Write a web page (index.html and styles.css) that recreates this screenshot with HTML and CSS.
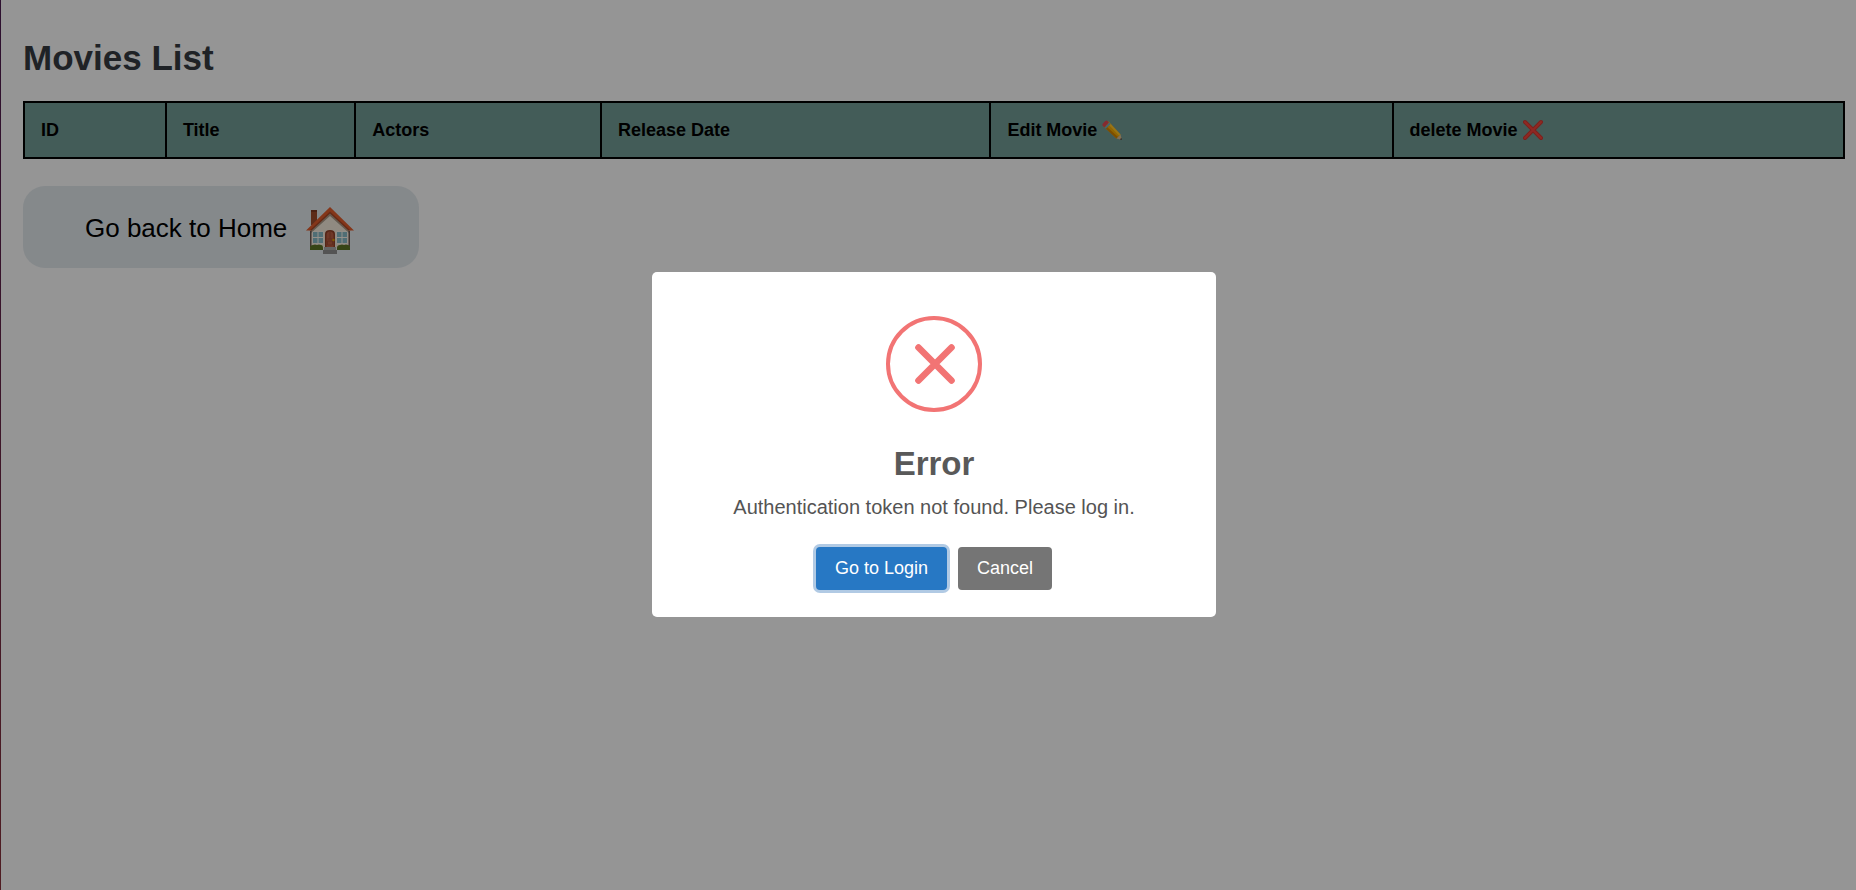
FILE: index.html
```html
<!DOCTYPE html>
<html lang="en">
<head>
<meta charset="utf-8">
<title>Movies List</title>
<link rel="stylesheet" href="styles.css">
</head>
<body>
<main class="page">
  <h1 class="page-title">Movies List</h1>
  <table class="movies">
    <colgroup>
      <col class="col-id">
      <col class="col-title">
      <col class="col-actors">
      <col class="col-date">
      <col class="col-edit">
      <col class="col-delete">
    </colgroup>
    <thead>
      <tr>
        <th>ID</th>
        <th>Title</th>
        <th>Actors</th>
        <th>Release Date</th>
        <th>Edit Movie <svg class="th-icon" viewBox="0 0 20 20" aria-hidden="true">
          <path d="M1.500 6.500 6.500 1.500 18.500 14.500 14.500 18.500z" fill="#f0a800"/>
          <path d="M1.500 6.500 3 5l13 12-1.500 1.500z" fill="#cf8000"/>
          <path d="M6.500 1.500l12 13-1.300 1.300L5 3z" fill="#ffc227"/>
          <path d="m14.500 18.500 4-4 1.500 5.500z" fill="#dcb98a"/>
          <path d="m17.800 19.400 1.600-1.600.6 2.200z" fill="#444"/>
          <path d="M2.300 7.500 7.300 2.500 8.600 4 3.900 8.800z" fill="#72a5bd"/>
          <path d="M.5 5.200C-.4 4 3.800-.4 5 .5L7 2.500 2.200 7.200z" fill="#de4650"/>
        </svg></th>
        <th>delete Movie <svg class="th-icon" viewBox="0 0 20 20" aria-hidden="true">
          <path d="M2 2l16 16M18 2L2 18" stroke="#cc3730" stroke-width="4" stroke-linecap="round"/>
          <path d="M2 2l16 16M18 2L2 18" stroke="#ee443b" stroke-width="2" stroke-linecap="round"/>
        </svg></th>
      </tr>
    </thead>
  </table>
  <button class="home-button" type="button">Go back to Home
    <svg class="home-icon" viewBox="0 0 50 50" aria-hidden="true">
      <path d="M6 4h6v15H6z" fill="#9b4a2a"/><path d="M6 4h6v2H6z" fill="#7d3a22"/>
      <path d="M6 23 25 5l19 18v20H6z" fill="#f0e6d8"/>
      <path d="M6 24 25 6l19 18v3L25 10 6 27z" fill="#a99784"/>
      <path d="M5 25h1.500v16H5zM43.500 25H45v16h-1.500z" fill="#6b5750"/>
      <path d="M25 1 1 24.500h4.500L25 6l19.500 18.500H49z" fill="#dd5a2b"/>
      <path d="M4.500 24.500 25 5.500l20.500 19h-2L25 7.500 6.500 24.500z" fill="#a94422"/>
      <path d="M7.500 25.500h11v12h-11zM31.500 25.500h11v12h-11z" fill="#f7f2ea"/>
      <path d="M8 26h4.500v5H8zM13.500 26H18v5h-4.500zM8 32h4.500v5H8zM13.500 32H18v5h-4.500zM32 26h4.500v5H32zM37.500 26H42v5h-4.500zM32 32h4.500v5H32zM37.500 32H42v5h-4.500z" fill="#86b8c3"/>
      <path d="M20 42V28q0-4 5-4t5 4v14z" fill="#8f3f26"/>
      <path d="M21.500 41V29q0-3.500 3.500-3.500t3.500 3.500v12z" fill="#b95c42"/>
      <path d="M22.500 33h5M25 26v7M22.500 35h5v4h-5z" stroke="#a04c33" fill="none"/>
      <circle cx="28.500" cy="34" r="1.200" fill="#d89a00"/>
      <path d="M5 44v-2q0-3 3-3 2-1 4 0 2-1 4 0 2 0 2 3v2zM32 44v-2q0-3 3-3 2-1 4 0 2-1 4 0 2 0 2 3v2z" fill="#5d7425"/>
      <path d="M19 41h12v3H19z" fill="#a9a9a9"/><path d="M18 44h14v4H18z" fill="#8c8c8c"/>
    </svg>
  </button>
</main>

<div class="overlay">
  <div class="modal" role="dialog" aria-modal="true" aria-labelledby="modal-title" aria-describedby="modal-text">
    <svg class="modal-icon" viewBox="0 0 96 96" aria-hidden="true">
      <circle cx="48" cy="48" r="46" fill="none" stroke="#f27474" stroke-width="4"/>
      <path d="M32.500 31.500l33 33M65.500 31.500l-33 33" stroke="#f27474" stroke-width="6.600" stroke-linecap="round"/>
    </svg>
    <h2 class="modal-title" id="modal-title">Error</h2>
    <p class="modal-text" id="modal-text">Authentication token not found. Please log in.</p>
    <div class="modal-actions">
      <button class="modal-button confirm" type="button">Go to Login</button>
      <button class="modal-button cancel" type="button">Cancel</button>
    </div>
  </div>
</div>
</body>
</html>
```

FILE: styles.css
```css
* {
  box-sizing: border-box;
}

body {
  margin: 0;
  min-height: 100vh;
  background: linear-gradient(#4b1b50, #85303a) left / 1px 100% no-repeat #f8f8f8;
  color: #000;
  font-family: "Liberation Sans", Arial, sans-serif;
}

.page {
  padding: 38px 11px 22px 23px;
}

.page-title {
  margin: 0 0 23px;
  color: #343a40;
  font-size: 35px;
  line-height: 40px;
}

.movies {
  width: 100%;
  border-collapse: collapse;
  table-layout: fixed;
  background: #719a93;
}

.col-id { width: 7.8%; }
.col-title { width: 10.4%; }
.col-actors { width: 13.5%; }
.col-date { width: 21.4%; }
.col-edit { width: 22.1%; }
.col-delete { width: 24.8%; }

.movies th {
  padding: 16px;
  border: 2px solid #000;
  font-size: 18px;
  line-height: 22px;
  text-align: left;
  white-space: nowrap;
}

.th-icon {
  width: 20px;
  height: 22px;
  vertical-align: top;
}

.home-button {
  display: flex;
  align-items: center;
  gap: 18px;
  margin-top: 27px;
  padding: 15px 64px 12px 62px;
  border: 0;
  border-radius: 22px;
  background: #dee4e8;
  color: #000;
  font: 26px "Liberation Sans", Arial, sans-serif;
}

.home-icon {
  width: 50px;
  height: 50px;
  margin-top: 5px;
}

.overlay {
  position: fixed;
  inset: 0;
  display: flex;
  align-items: center;
  justify-content: center;
  padding: 10px 0 12px 12px;
  background: rgba(0, 0, 0, 0.4);
}

.modal {
  display: flex;
  flex-direction: column;
  align-items: center;
  width: 564px;
  max-width: 100%;
  padding: 44px 18px 27px;
  border-radius: 5px;
  background: #fff;
  color: #545454;
}

.modal-icon {
  width: 96px;
  height: 96px;
}

.modal-title {
  margin: 33px 0 13px;
  color: #595959;
  font-size: 33px;
  line-height: 38px;
}

.modal-text {
  margin: 0 0 28px;
  font-size: 20px;
  line-height: 23px;
}

.modal-actions {
  display: flex;
  gap: 11px;
}

.modal-button {
  padding: 11px 19px;
  border: 0;
  border-radius: 4px;
  color: #fff;
  font: 18px/21px "Liberation Sans", Arial, sans-serif;
}

.confirm {
  background: #2778c4;
  box-shadow: 0 0 0 3px #b1cae4;
}

.cancel {
  background: #757575;
}
```
